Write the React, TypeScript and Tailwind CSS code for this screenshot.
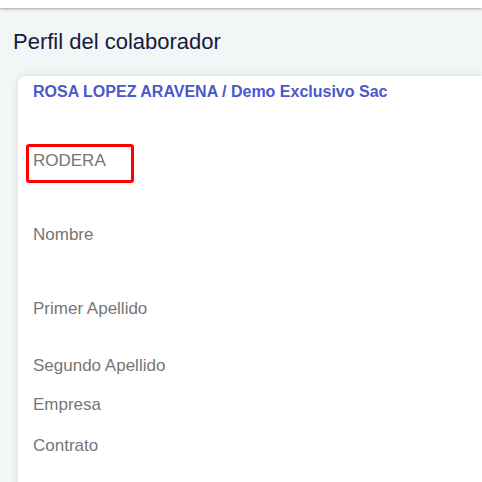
export default function App() {
  const labels = [
    { text: 'Nombre', mt: 'mt-[54px]' },
    { text: 'Primer Apellido', mt: 'mt-[54px]' },
    { text: 'Segundo Apellido', mt: 'mt-[37px]' },
    { text: 'Empresa', mt: 'mt-[19px]' },
    { text: 'Contrato', mt: 'mt-[21px]' },
  ];

  return (
    <div className="h-[482px] w-[482px] overflow-hidden bg-[#f3f6f6] font-['Liberation_Sans',Arial,sans-serif]">
      <div className="h-[8px] bg-white shadow-[0_1px_3px_rgba(0,0,0,0.35)]" />

      <h1 className="mt-[21px] pl-[13px] text-[22px] leading-[26px] text-[#161a3d]">Perfil del colaborador</h1>

      <div className="ml-[18px] mt-[21px] h-[500px] rounded-tl-lg bg-white pl-[15px] pt-[6px] shadow-[0_0_8px_rgba(0,0,0,0.12)]">
        <h2 className="text-[16px] font-bold leading-[20px] text-[#4a58cc]">
          ROSA LOPEZ ARAVENA / Demo Exclusivo Sac
        </h2>

        <div className="relative mt-[49px]">
          <p className="text-[17px] leading-[20px] text-[#767676]">RODERA</p>
          <div className="absolute -left-[7px] -top-[7px] h-[39px] w-[108px] rounded-[3px] border-[3px] border-[#ff0000]" />
        </div>

        {labels.map((label) => (
          <p key={label.text} className={`${label.mt} text-[17px] leading-[20px] text-[#767676]`}>
            {label.text}
          </p>
        ))}
      </div>
    </div>
  );
}
